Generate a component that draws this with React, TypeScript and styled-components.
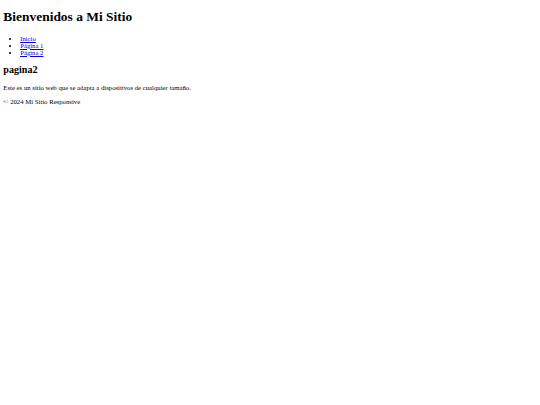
import styled, { createGlobalStyle } from "styled-components";

// the reference is a default-styled page shown at about 0.42 of its size
const s = 0.42;
const px = (n: number) => `${(n * s).toFixed(2)}px`;

const GlobalStyle = createGlobalStyle`
  body {
    margin: ${px(8)};
    font-family: "Liberation Serif", "Times New Roman", serif;
    font-size: ${px(16)};
    color: #000;
    background: #fff;
  }
`;

const Header = styled.header``;

const Title = styled.h1`
  font-size: ${px(32)};
  font-weight: bold;
  line-height: 1.1;
  margin: ${px(16)} 0 ${px(24)};
`;

const NavList = styled.ul`
  list-style: disc;
  margin: ${px(16)} 0 ${px(19)};
  padding-left: ${px(40)};
`;

const NavLink = styled.a`
  color: #0000ee;
  text-decoration: underline;
`;

const SectionTitle = styled.h2`
  font-size: ${px(24)};
  font-weight: bold;
  margin: ${px(20)} 0;
`;

const BodyText = styled.p`
  margin: ${px(18)} 0;
`;

const links = ["Inicio", "Página 1", "Página 2"];

export default function App() {
  return (
    <>
      <GlobalStyle />
      <Header>
        <Title>Bienvenidos a Mi Sitio</Title>
        <nav>
          <NavList>
            {links.map((l) => (
              <li key={l}>
                <NavLink href="#">{l}</NavLink>
              </li>
            ))}
          </NavList>
        </nav>
      </Header>
      <main>
        <SectionTitle>pagina2</SectionTitle>
        <BodyText>Este es un sitio web que se adapta a dispositivos de cualquier tamaño.</BodyText>
      </main>
      <footer>
        <BodyText>© 2024 Mi Sitio Responsive</BodyText>
      </footer>
    </>
  );
}
